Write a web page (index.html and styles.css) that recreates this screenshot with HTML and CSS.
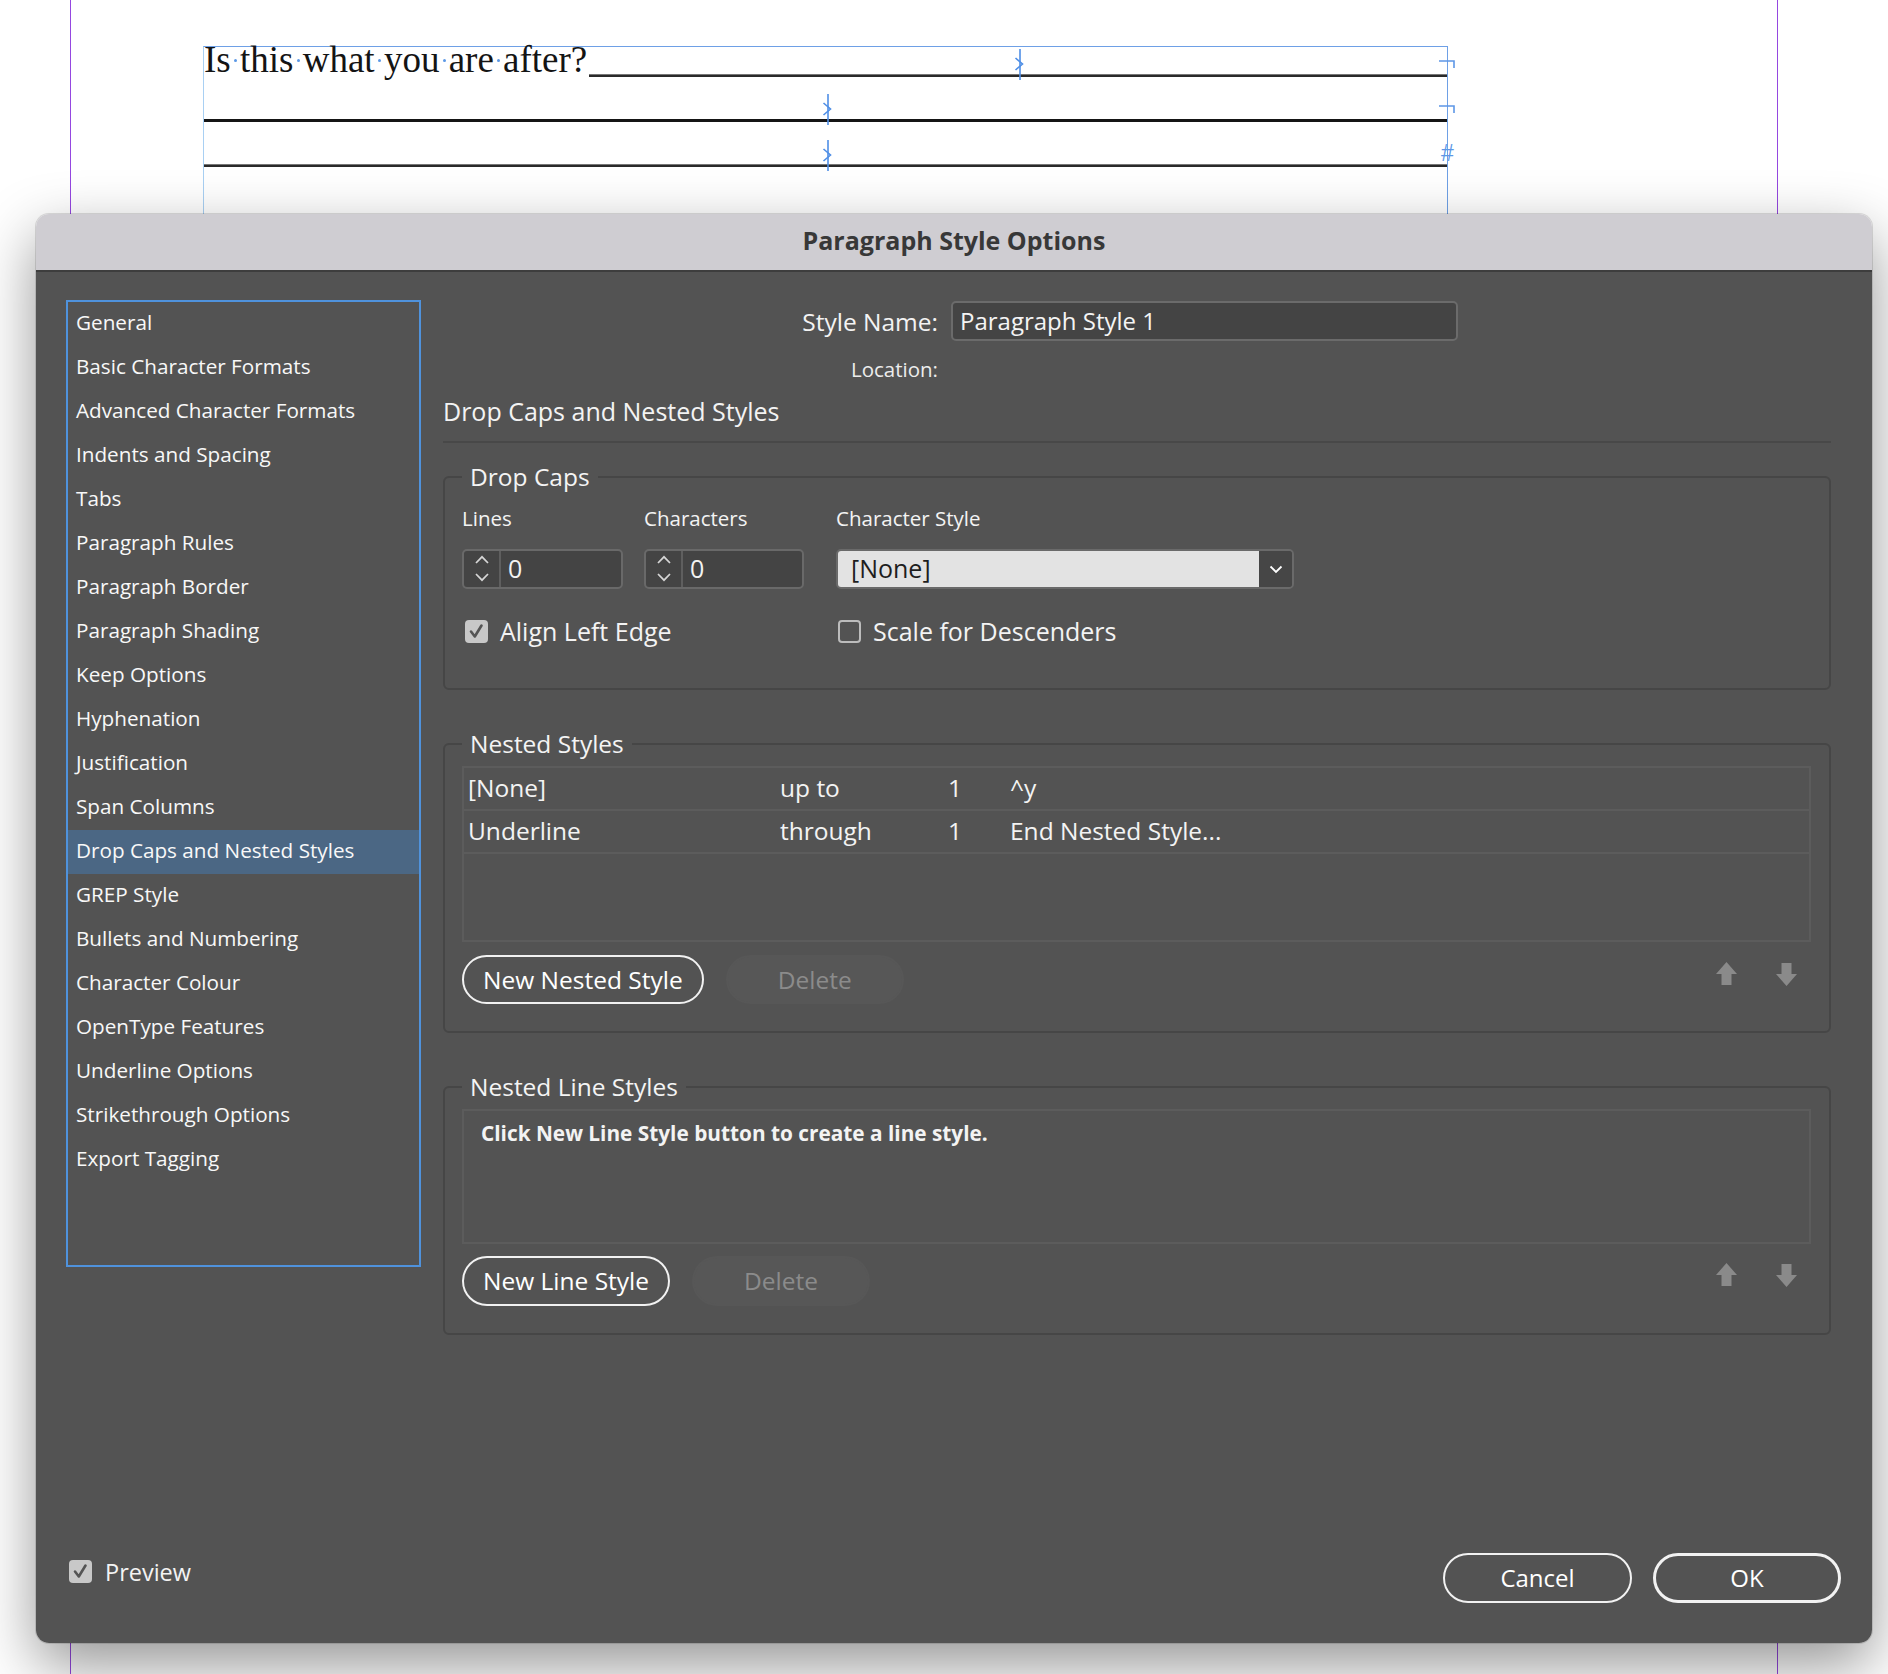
FILE: index.html
```html
<!DOCTYPE html>
<html lang="en">
<head>
<meta charset="utf-8">
<title>Paragraph Style Options</title>
<link rel="stylesheet" href="styles.css">
</head>
<body>
<div class="canvas">
  <div class="guide guide-l"></div>
  <div class="guide guide-r"></div>
  <div class="frame">
    <div class="tline tline1"><span class="ttext">Is<span class="sp"> </span>this<span class="sp"> </span>what<span class="sp"> </span>you<span class="sp"> </span>are<span class="sp"> </span>after?</span><span class="rule"></span></div>
    <div class="tline tline2"><span class="rule rule-black"></span></div>
    <div class="tline tline3"><span class="rule"></span></div>
    <svg class="mark m1" width="14" height="31" viewBox="0 0 14 31"><path d="M7 0V31" stroke="#4f8fe6" stroke-width="1.6" fill="none"/><path d="M2.5 9L9.5 15L2.5 21" stroke="#4f8fe6" stroke-width="1.6" fill="none"/></svg>
    <svg class="mark m2" width="14" height="31" viewBox="0 0 14 31"><path d="M7 0V31" stroke="#4f8fe6" stroke-width="1.6" fill="none"/><path d="M2.5 9L9.5 15L2.5 21" stroke="#4f8fe6" stroke-width="1.6" fill="none"/></svg>
    <svg class="mark m3" width="14" height="31" viewBox="0 0 14 31"><path d="M7 0V31" stroke="#4f8fe6" stroke-width="1.6" fill="none"/><path d="M2.5 9L9.5 15L2.5 21" stroke="#4f8fe6" stroke-width="1.6" fill="none"/></svg>
    <svg class="brk b1" width="16" height="8" viewBox="0 0 16 8"><path d="M0 1H15V8" stroke="#5d97e6" stroke-width="1.6" fill="none"/></svg>
    <svg class="brk b2" width="16" height="8" viewBox="0 0 16 8"><path d="M0 1H15V8" stroke="#5d97e6" stroke-width="1.6" fill="none"/></svg>
    <span class="eos">#</span>
  </div>
</div>

<div class="dialog">
  <div class="titlebar">Paragraph Style Options</div>
  <div class="dbody">
    <div class="content">
      <ul class="sidebar">
        <li>General</li>
        <li>Basic Character Formats</li>
        <li>Advanced Character Formats</li>
        <li>Indents and Spacing</li>
        <li>Tabs</li>
        <li>Paragraph Rules</li>
        <li>Paragraph Border</li>
        <li>Paragraph Shading</li>
        <li>Keep Options</li>
        <li>Hyphenation</li>
        <li>Justification</li>
        <li>Span Columns</li>
        <li class="sel">Drop Caps and Nested Styles</li>
        <li>GREP Style</li>
        <li>Bullets and Numbering</li>
        <li>Character Colour</li>
        <li>OpenType Features</li>
        <li>Underline Options</li>
        <li>Strikethrough Options</li>
        <li>Export Tagging</li>
      </ul>

      <div class="main">
        <div class="name-row">
          <span class="name-label">Style Name:</span>
          <div class="name-field">Paragraph Style 1</div>
        </div>
        <div class="loc-row">Location:</div>
        <div class="heading">Drop Caps and Nested Styles</div>
        <div class="sep"></div>

        <fieldset class="group">
          <legend>Drop Caps</legend>
          <div class="dc-labels">
            <span class="c1">Lines</span>
            <span class="c2">Characters</span>
            <span class="c3">Character Style</span>
          </div>
          <div class="dc-controls">
            <div class="spin c1">
              <div class="spin-arrows">
                <svg width="16" height="36" viewBox="0 0 16 36"><path d="M2 12L8 5.8L14 12" stroke="#d6d6d6" stroke-width="1.7" fill="none"/><path d="M2 23L8 29.2L14 23" stroke="#d6d6d6" stroke-width="1.7" fill="none"/></svg>
              </div>
              <div class="spin-val">0</div>
            </div>
            <div class="spin c2">
              <div class="spin-arrows">
                <svg width="16" height="36" viewBox="0 0 16 36"><path d="M2 12L8 5.8L14 12" stroke="#d6d6d6" stroke-width="1.7" fill="none"/><path d="M2 23L8 29.2L14 23" stroke="#d6d6d6" stroke-width="1.7" fill="none"/></svg>
              </div>
              <div class="spin-val">0</div>
            </div>
            <div class="dd c3">
              <div class="dd-val">[None]</div>
              <div class="dd-btn"><svg width="14" height="9" viewBox="0 0 14 9"><path d="M1.5 1.5L7 7L12.5 1.5" stroke="#ffffff" stroke-width="1.8" fill="none"/></svg></div>
            </div>
          </div>
          <div class="dc-checks">
            <label class="chk chk-first"><span class="box on"><svg width="23" height="23" viewBox="0 0 23 23"><path d="M6 11.5L9.8 16.5L16.5 5.5" stroke="#555555" stroke-width="2.6" fill="none" stroke-linecap="round" stroke-linejoin="round"/></svg></span><span class="chk-text">Align Left Edge</span></label>
            <label class="chk"><span class="box off"></span><span class="chk-text">Scale for Descenders</span></label>
          </div>
        </fieldset>

        <fieldset class="group group-gap">
          <legend>Nested Styles</legend>
          <div class="nlist">
            <div class="nrow"><span>[None]</span><span>up to</span><span>1</span><span>^y</span></div>
            <div class="nrow"><span>Underline</span><span>through</span><span>1</span><span>End Nested Style...</span></div>
          </div>
          <div class="btn-row">
            <button class="btn">New Nested Style</button>
            <button class="btn btn-dis">Delete</button>
            <div class="moves">
              <svg width="21" height="24" viewBox="0 0 21 24"><path d="M10.5 0L21 12H15.5V23H5.5V12H0Z" fill="#8a8a8a"/></svg>
              <svg width="21" height="24" viewBox="0 0 21 24"><path d="M10.5 24L21 12H15.5V1H5.5V12H0Z" fill="#8a8a8a"/></svg>
            </div>
          </div>
        </fieldset>

        <fieldset class="group group-gap">
          <legend>Nested Line Styles</legend>
          <div class="llist">Click New Line Style button to create a line style.</div>
          <div class="btn-row btn-row2">
            <button class="btn">New Line Style</button>
            <button class="btn btn-dis">Delete</button>
            <div class="moves">
              <svg width="21" height="24" viewBox="0 0 21 24"><path d="M10.5 0L21 12H15.5V23H5.5V12H0Z" fill="#8a8a8a"/></svg>
              <svg width="21" height="24" viewBox="0 0 21 24"><path d="M10.5 24L21 12H15.5V1H5.5V12H0Z" fill="#8a8a8a"/></svg>
            </div>
          </div>
        </fieldset>
      </div>
    </div>

    <div class="footer">
      <label class="preview"><span class="box on"><svg width="23" height="23" viewBox="0 0 23 23"><path d="M6 11.5L9.8 16.5L16.5 5.5" stroke="#555555" stroke-width="2.6" fill="none" stroke-linecap="round" stroke-linejoin="round"/></svg></span><span class="preview-text">Preview</span></label>
      <div class="actions">
        <button class="btn btn-cancel">Cancel</button>
        <button class="btn btn-ok">OK</button>
      </div>
    </div>
  </div>
</div>
</body>
</html>
```

FILE: styles.css
```css
* { box-sizing: border-box; }

html, body {
  margin: 0;
  padding: 0;
}

body {
  width: 1888px;
  height: 1674px;
  overflow: hidden;
  position: relative;
  background: #ffffff;
  font-family: "Open Sans", "Noto Sans", sans-serif;
}

/* ---------- document canvas ---------- */
.canvas {
  position: absolute;
  inset: 0;
}

.guide {
  position: absolute;
  top: 0;
  bottom: 0;
  width: 1px;
  background: #9547e0;
}
.guide-l { left: 70px; }
.guide-r { left: 1777px; }

.frame {
  position: absolute;
  left: 203px;
  top: 46px;
  width: 1245px;
  height: 1300px;
  border-top: 1px solid #6ea0e6;
  border-left: 1px solid #a9d0f3;
  border-right: 1px solid #6ea0e6;
}

.tline {
  display: flex;
  align-items: flex-end;
}
.tline1 { height: 30px; }
.tline2 { height: 45px; }
.tline3 { height: 45px; }

.ttext {
  font-family: "Liberation Serif", "Times New Roman", serif;
  font-size: 37px;
  line-height: 37px;
  color: #141414;
  margin-bottom: -1px;
  white-space: nowrap;
}

.sp { position: relative; }
.sp::after {
  content: "";
  position: absolute;
  left: calc(50% - 1.5px);
  top: 20px;
  width: 3px;
  height: 3px;
  border-radius: 50%;
  background: #5b98e6;
}

.rule {
  flex: 1;
  height: 3px;
  background: #2a2a2a;
  margin-left: 2px;
  border-top: 1px solid #777;
}
.tline2 .rule, .tline3 .rule { margin-left: 0; }
.rule-black { background: #151515; border-top: 0; }

.mark { position: absolute; }
.m1 { left: 809px; top: 2px; }
.m2 { left: 617px; top: 47px; }
.m3 { left: 617px; top: 93px; }

.brk { position: absolute; left: 1235px; }
.b1 { top: 13px; }
.b2 { top: 58px; }

.eos {
  position: absolute;
  left: 1237px;
  top: 92px;
  font-family: "Liberation Sans", Arial, sans-serif;
  font-size: 23px;
  line-height: 28px;
  color: #5d97e6;
}

/* ---------- dialog ---------- */
.dialog {
  position: absolute;
  left: 36px;
  top: 214px;
  width: 1836px;
  height: 1429px;
  border-radius: 13px;
  overflow: hidden;
  display: flex;
  flex-direction: column;
  box-shadow: 0 22px 60px rgba(0, 0, 0, 0.42), 0 0 0 1px rgba(0, 0, 0, 0.12);
  color: #f3f3f3;
}

.titlebar {
  height: 58px;
  flex: none;
  background: #cfcdd2;
  border-bottom: 2px solid #3d3d3d;
  text-align: center;
  font-weight: 700;
  font-size: 25px;
  line-height: 52px;
  color: #383838;
}

.dbody {
  flex: 1;
  background: #535353;
  display: flex;
  flex-direction: column;
  padding: 28px 41px 40px 30px;
}

.content {
  display: flex;
  align-items: flex-start;
  gap: 22px;
}

/* sidebar */
.sidebar {
  list-style: none;
  margin: 0;
  padding: 0;
  width: 355px;
  height: 967px;
  flex: none;
  border: 2px solid #4f92dc;
}
.sidebar li {
  height: 44px;
  line-height: 41px;
  padding-left: 8px;
  font-size: 20.7px;
  color: #f8f8f8;
  white-space: nowrap;
}
.sidebar li.sel { background: #4b6784; }

/* main */
.main {
  flex: 1;
  min-width: 0;
  display: flex;
  flex-direction: column;
  padding-top: 1px;
}

.name-row {
  display: flex;
  align-items: center;
}
.name-label {
  width: 495px;
  text-align: right;
  font-size: 24.5px;
  margin-right: 13px;
}
.name-field {
  width: 507px;
  height: 40px;
  border: 2px solid #6b6b6b;
  border-radius: 5px;
  background: #444444;
  font-size: 24px;
  line-height: 35px;
  padding-left: 7px;
  color: #f4f4f4;
}

.loc-row {
  width: 495px;
  margin-top: 14px;
  text-align: right;
  font-size: 20.5px;
  line-height: 28px;
  color: #ececec;
}

.heading {
  margin-top: 11px;
  font-size: 25px;
  line-height: 34px;
}

.sep {
  margin-top: 13px;
  height: 2px;
  background: #484848;
}

/* groups */
.group {
  margin: 17px 0 0 0;
  min-width: 0;
  border: 2px solid #464646;
  border-radius: 6px;
  padding: 10px 18px 40px 17px;
}
.group-gap { margin-top: 37px; padding-top: 5px; padding-bottom: 27px; }

.group legend {
  padding: 0 8px;
  font-size: 24.5px;
  line-height: 34px;
  color: #f4f4f4;
}

.c1 { width: 161px; flex: none; }
.c2 { width: 160px; flex: none; margin-left: 21px; }
.c3 { width: 458px; flex: none; margin-left: 32px; }

.dc-labels {
  display: flex;
  font-size: 20.5px;
  line-height: 28px;
}

.dc-controls {
  display: flex;
  margin-top: 17px;
}

.spin {
  height: 40px;
  display: flex;
  border: 2px solid #696969;
  border-radius: 5px;
  background: #444444;
  overflow: hidden;
}
.spin-arrows {
  width: 37px;
  flex: none;
  border-right: 2px solid #5f5f5f;
  display: flex;
  justify-content: center;
}
.spin-val {
  padding-left: 7px;
  font-size: 25px;
  line-height: 35px;
}

.dd {
  height: 40px;
  display: flex;
  border: 2px solid #6a6a6a;
  border-radius: 5px;
  overflow: hidden;
}
.dd-val {
  flex: 1;
  background: #e3e3e3;
  color: #1e1e1e;
  font-size: 25px;
  line-height: 35px;
  padding-left: 13px;
}
.dd-btn {
  width: 33px;
  flex: none;
  background: #464646;
  display: flex;
  align-items: center;
  justify-content: center;
}

.dc-checks {
  display: flex;
  align-items: center;
  height: 34px;
  margin-top: 25px;
}
.chk {
  display: flex;
  align-items: center;
}
.chk-first {
  width: 373px;
  margin-left: 3px;
}
.box {
  width: 23px;
  height: 23px;
  flex: none;
  border-radius: 4px;
  display: block;
}
.box svg { display: block; }
.box.on { background: #c8c8c8; }
.box.off { border: 2px solid #bcbcbc; }
.chk-text {
  margin-left: 12px;
  font-size: 25px;
  line-height: 34px;
}

/* nested list */
.nlist {
  height: 176px;
  border: 2px solid #5c5c5c;
}
.nrow {
  display: grid;
  grid-template-columns: 312px 168px 62px 1fr;
  height: 43px;
  border-bottom: 2px solid #5c5c5c;
  padding-left: 4px;
  font-size: 24.5px;
  line-height: 39px;
  color: #f3f3f3;
}

.llist {
  height: 135px;
  border: 2px solid #5c5c5c;
  padding: 8px 0 0 17px;
  font-size: 20.8px;
  font-weight: 700;
  line-height: 28px;
}

.btn-row {
  display: flex;
  align-items: center;
  gap: 22px;
  margin-top: 13px;
}
.btn-row2 { margin-top: 12px; }

.btn {
  height: 49px;
  padding: 0 19px;
  border: 2px solid #f2f2f2;
  border-radius: 25px;
  background: transparent;
  color: #ffffff;
  font-family: "Open Sans", "Noto Sans", sans-serif;
  font-size: 24.5px;
  line-height: 44px;
}
.btn-row2 .btn { height: 50px; }
.btn-dis {
  width: 178px;
  padding: 0;
  border-color: #575757;
  background: #575757;
  color: #8b8b8b;
}

.moves {
  margin-left: auto;
  margin-right: 14px;
  align-self: flex-start;
  margin-top: 7px;
  display: flex;
  gap: 39px;
}
.moves svg { display: block; }

/* footer */
.footer {
  margin-top: auto;
  margin-right: -10px;
  padding-left: 3px;
  display: flex;
  align-items: center;
  height: 50px;
}
.preview {
  display: flex;
  align-items: center;
  margin-bottom: 13px;
}
.preview-text {
  margin-left: 13px;
  font-size: 23.5px;
  line-height: 32px;
}
.actions {
  margin-left: auto;
  display: flex;
  gap: 21px;
}
.btn-cancel {
  width: 189px;
  height: 50px;
  padding: 0;
  font-size: 24px;
}
.btn-ok {
  width: 188px;
  height: 50px;
  padding: 0;
  border-width: 3.5px;
  font-size: 24px;
  line-height: 42px;
}
```
